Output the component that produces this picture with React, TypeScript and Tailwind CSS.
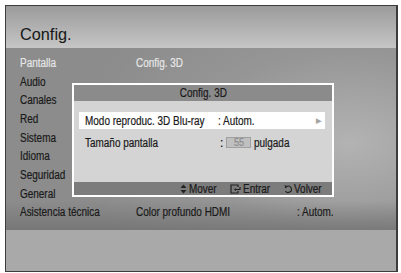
import { ReactNode } from 'react'

// 左メニュー
const menu = ['Pantalla', 'Audio', 'Canales', 'Red', 'Sistema', 'Idioma', 'Seguridad', 'General', 'Asistencia técnica']

// 細字（コンデンス）テキスト
const N = ({ children, center }: { children: ReactNode; center?: boolean }) => (
  <span className={`inline-block whitespace-nowrap scale-x-[0.83] ${center ? 'origin-center' : 'origin-left'}`}>{children}</span>
)

const MenuRow = ({ label, active, children }: { label: string; active?: boolean; children?: ReactNode }) => (
  <div className="flex h-[18.7px] items-center">
    <span className={`w-[116px] pl-[14px] ${active ? 'text-[#e6e6e6]' : 'text-[#1a1a1a]'}`}>
      <N>{label}</N>
    </span>
    {children}
  </div>
)

// 上下矢印
const MoveIcon = () => (
  <svg width="7" height="10" viewBox="0 0 7 10" className="mr-[2px] w-[7px]">
    <path d="M3.5 0.5 L6.5 4 L0.5 4 Z" fill="#222" />
    <path d="M3.5 9.5 L6.5 6 L0.5 6 Z" fill="#222" />
  </svg>
)

const EnterIcon = () => (
  <svg width="11" height="10" viewBox="0 0 11 10" className="mr-[2px]">
    <path d="M8 3 V1 H1 V9 H8 V7" fill="none" stroke="#222" strokeWidth="1.2" />
    <path d="M10 3 V5.5 H4.5" fill="none" stroke="#222" strokeWidth="1.2" />
    <path d="M4 5.5 L6 4 L6 7 Z" fill="#222" />
  </svg>
)

const BackIcon = () => (
  <svg width="8" height="10" viewBox="0 0 9 10">
    <path d="M3 2.2 A3.6 3.6 0 1 1 1.6 7.2" fill="none" stroke="#222" strokeWidth="1.3" />
    <path d="M0.8 0.6 L4.2 2.2 L1.2 4.4 Z" fill="#222" />
  </svg>
)

export default function App() {
  return (
    <div className="relative h-[273px] w-[401px] bg-white pl-[5px] pt-[5px] font-['Liberation_Sans',Arial,sans-serif]">
      <div className="flex h-[267px] w-[393px] flex-col border-t border-b border-l-[1.5px] border-r-2 border-[#3c3c3c] bg-[#a9a9a9]">
        {/* ヘッダー */}
        <div className="flex h-[42px] items-end bg-gradient-to-b from-[#9b9b9b] to-[#c6c6c6] pb-[4px] pl-[14px]">
          <h1 className="text-[16.3px] leading-[20px] text-[#161616]">Config.</h1>
        </div>

        {/* メイン */}
        <div className="h-[182px] bg-[linear-gradient(to_bottom,transparent_84%,rgba(112,112,112,0.75)_100%),radial-gradient(ellipse_70%_90%_at_88%_52%,#b3b3b3_0%,#969696_55%,#8c8c8c_100%)] pt-[5.6px] text-[12px] leading-none [-webkit-text-stroke:0.2px_currentColor]">
          {menu.map((m, i) => (
            <MenuRow key={m} label={m} active={i === 0}>
              {i === 0 && (
                <span className="pl-[14px] text-[#e6e6e6]">
                  <N>Config. 3D</N>
                </span>
              )}
              {i === 8 && (
                <div className="flex flex-1 pl-[14px] text-[#1a1a1a]">
                  <span className="w-[161px]">
                    <N>Color profundo HDMI</N>
                  </span>
                  <N>: Autom.</N>
                </div>
              )}
            </MenuRow>
          ))}
        </div>
        <div className="flex-1 bg-[#a9a9a9]" />
      </div>

      {/* ダイアログ */}
      <div className="absolute left-[72px] top-[83px] flex h-[114px] w-[262px] flex-col border-2 border-white bg-[#d4d4d4] text-[12px] leading-none text-[#1a1a1a] [-webkit-text-stroke:0.2px_currentColor]">
        <div className="flex h-[16px] items-center justify-center bg-[#8b8b8b] text-[12px]">
          <N center>Config. 3D</N>
        </div>
        <div className="flex-1 pl-[5px] pr-[7px] pt-[11px]">
          <div className="flex h-[17px] items-center bg-white pl-[6px] pr-[4px]">
            <span className="w-[133px]">
              <N>Modo reproduc. 3D Blu-ray</N>
            </span>
            <span className="flex-1">
              <N>: Autom.</N>
            </span>
            <span className="text-[7px] text-[#a4a4a4]">▶</span>
          </div>
          <div className="mt-[5px] flex h-[17px] items-center pl-[6px]">
            <span className="w-[135px]">
              <N>Tamaño pantalla</N>
            </span>
            <span>:</span>
            <span className="ml-[3px] flex h-[11px] w-[25px] items-center justify-center border border-[#a0a0a0] bg-[#c0c0c0] text-[11px] text-[#8c8c8c]">
              <N center>55</N>
            </span>
            <span className="ml-[3px]">
              <N>pulgada</N>
            </span>
          </div>
        </div>
        <div className="flex h-[13px] items-center bg-[#7c7c7c] pl-[106px] text-[12px] text-[#1a1a1a]">
          <MoveIcon />
          <span className="w-[41px]">
            <N>Mover</N>
          </span>
          <EnterIcon />
          <span className="w-[41px]">
            <N>Entrar</N>
          </span>
          <BackIcon />
          <span className="pl-[2px]">
            <N>Volver</N>
          </span>
        </div>
      </div>
    </div>
  )
}
